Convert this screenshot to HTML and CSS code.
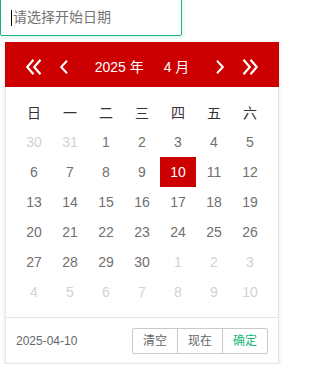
FILE: index.html
```html
<!DOCTYPE html>
<html lang="zh-CN">
<head>
<meta charset="utf-8">
<title>laydate</title>
<link rel="stylesheet" href="styles.css">
</head>
<body>
<div class="page">
  <div class="field">
    <input class="date-input" type="text" placeholder="请选择开始日期">
    <span class="caret"></span>
  </div>
  <div class="laydate">
    <div class="ld-header">
      <span class="ld-btn">
        <svg width="16" height="16" viewBox="0 0 16 16"><polyline points="7.5,0.8 1.2,8 7.5,15.2" fill="none" stroke="#fff" stroke-width="2.2"/><polyline points="14.5,0.8 8.2,8 14.5,15.2" fill="none" stroke="#fff" stroke-width="2.2"/></svg>
      </span>
      <span class="ld-btn">
        <svg width="8" height="14" viewBox="0 0 8 14"><polyline points="7,0.8 1.2,7 7,13.2" fill="none" stroke="#fff" stroke-width="2"/></svg>
      </span>
      <div class="ld-title"><span>2025 年</span><span>4 月</span></div>
      <span class="ld-btn">
        <svg width="8" height="14" viewBox="0 0 8 14"><polyline points="1,0.8 6.8,7 1,13.2" fill="none" stroke="#fff" stroke-width="2"/></svg>
      </span>
      <span class="ld-btn">
        <svg width="16" height="16" viewBox="0 0 16 16"><polyline points="1.5,0.8 7.8,8 1.5,15.2" fill="none" stroke="#fff" stroke-width="2.2"/><polyline points="8.5,0.8 14.8,8 8.5,15.2" fill="none" stroke="#fff" stroke-width="2.2"/></svg>
      </span>
    </div>
    <div class="ld-content">
      <table class="ld-table">
        <thead>
          <tr><th>日</th><th>一</th><th>二</th><th>三</th><th>四</th><th>五</th><th>六</th></tr>
        </thead>
        <tbody>
          <tr><td class="other">30</td><td class="other">31</td><td>1</td><td>2</td><td>3</td><td>4</td><td>5</td></tr>
          <tr><td>6</td><td>7</td><td>8</td><td>9</td><td class="selected">10</td><td>11</td><td>12</td></tr>
          <tr><td>13</td><td>14</td><td>15</td><td>16</td><td>17</td><td>18</td><td>19</td></tr>
          <tr><td>20</td><td>21</td><td>22</td><td>23</td><td>24</td><td>25</td><td>26</td></tr>
          <tr><td>27</td><td>28</td><td>29</td><td>30</td><td class="other">1</td><td class="other">2</td><td class="other">3</td></tr>
          <tr><td class="other">4</td><td class="other">5</td><td class="other">6</td><td class="other">7</td><td class="other">8</td><td class="other">9</td><td class="other">10</td></tr>
        </tbody>
      </table>
    </div>
    <div class="ld-footer">
      <span class="ld-value">2025-04-10</span>
      <div class="ld-btns">
        <span class="ld-fbtn">清空</span><span class="ld-fbtn">现在</span><span class="ld-fbtn confirm">确定</span>
      </div>
    </div>
  </div>
</div>
</body>
</html>
```
FILE: styles.css
```css
html, body {
  margin: 0;
  padding: 0;
  background: #fff;
}
body {
  font-family: "Liberation Sans", "Noto Sans CJK SC", sans-serif;
  font-size: 14px;
  color: #777;
}
.page {
  display: flex;
  flex-direction: column;
  align-items: flex-start;
}
.field {
  position: relative;
  margin-top: -2px;
}
.date-input {
  display: block;
  box-sizing: border-box;
  width: 182px;
  height: 38px;
  margin: 0;
  padding: 0 10px 0 12px;
  border: 1px solid #16b777;
  border-radius: 2px;
  box-shadow: 0 0 0 3px rgba(22, 183, 119, 0.08);
  outline: none;
  font-family: "Liberation Sans", "Noto Sans CJK SC", sans-serif;
  font-size: 14px;
  color: #333;
  background: #fff;
}
.date-input::placeholder {
  color: #757575;
}
.caret {
  position: absolute;
  left: 11px;
  top: 12px;
  width: 1px;
  height: 16px;
  background: #000;
}
.laydate {
  margin: 6px 0 0 5px;
  width: 272px;
  background: #fff;
  border: 1px solid #e6e6e6;
  border-top: none;
  box-shadow: 0 2px 4px rgba(0, 0, 0, 0.12);
}
.ld-header {
  display: flex;
  align-items: center;
  height: 45px;
  box-sizing: border-box;
  padding: 10px 15px 5px;
  margin: 0 -1px;
  background: #cc0000;
  color: #fff;
}
.ld-btn {
  width: 28px;
  height: 30px;
  display: flex;
  align-items: center;
  justify-content: center;
}
.ld-btn + .ld-btn {
  margin-left: 2px;
}
.ld-title {
  flex: 1;
  display: flex;
  justify-content: center;
  line-height: 30px;
  font-size: 14px;
}
.ld-title span {
  padding: 0 10px;
}
.ld-content {
  padding: 10px;
}
.ld-table {
  border-collapse: collapse;
  border-spacing: 0;
}
.ld-table th,
.ld-table td {
  width: 36px;
  height: 30px;
  padding: 0;
  text-align: center;
  font-size: 14px;
}
.ld-table th {
  font-weight: 400;
  color: #333;
}
.ld-table td {
  color: #707070;
}
.ld-table td.other {
  color: #d2d2d2;
}
.ld-table td.selected {
  background: #cc0000;
  color: #fff;
}
.ld-footer {
  display: flex;
  align-items: center;
  justify-content: space-between;
  box-sizing: border-box;
  height: 46px;
  padding: 0 10px;
  border-top: 1px solid #e2e2e2;
  font-size: 12px;
}
.ld-value {
  color: #666;
}
.ld-btns {
  display: flex;
}
.ld-fbtn {
  display: block;
  height: 26px;
  box-sizing: border-box;
  line-height: 24px;
  padding: 0 10px;
  border: 1px solid #c9c9c9;
  margin-left: -1px;
  color: #666;
  background: #fff;
  white-space: nowrap;
}
.ld-fbtn:first-child {
  border-radius: 2px 0 0 2px;
}
.ld-fbtn:last-child {
  border-radius: 0 2px 2px 0;
}
.ld-fbtn.confirm {
  color: #16b777;
}
```
